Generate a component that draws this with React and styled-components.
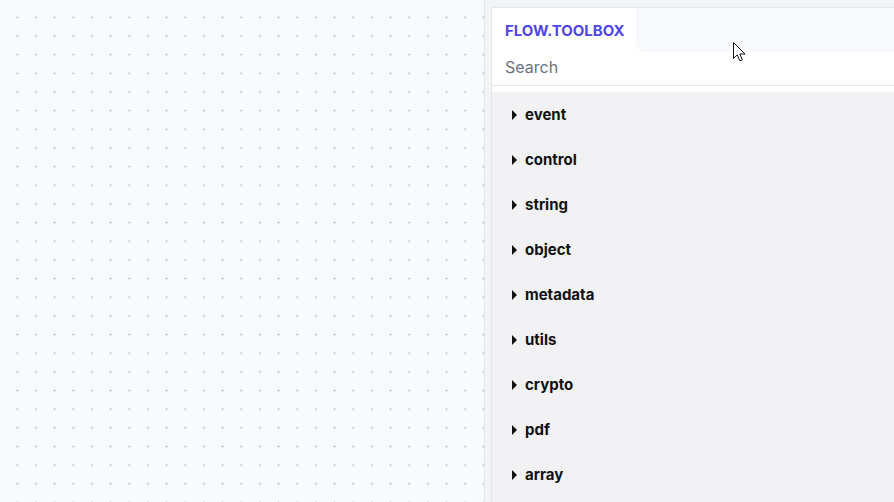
import React from "react";
import styled, { createGlobalStyle } from "styled-components";

const GlobalStyle = createGlobalStyle`
  html, body {
    margin: 0;
    padding: 0;
    height: 100%;
    overflow: hidden;
  }
  body {
    font-family: Inter, "Noto Sans", Arial, sans-serif;
  }
  #root {
    height: 100%;
  }
`;

const Page = styled.div`
  position: relative;
  display: flex;
  width: 894px;
  height: 502px;
  overflow: hidden;
`;

const Canvas = styled.div`
  width: 484px;
  flex-shrink: 0;
  border-right: 1px solid #e4e6ea;
  background-color: #f9fafb;
  background-image: radial-gradient(circle, #c4c6cc 0.9px, transparent 1.2px);
  background-size: 18.67px 18.67px;
  background-position: 8px 8px;
`;

const Sidebar = styled.div`
  flex: 1;
  background: #f3f4f6;
  padding: 7px 0 0 6px;
  display: flex;
`;

const Panel = styled.div`
  flex: 1;
  display: flex;
  flex-direction: column;
  background: #fff;
  border: 1px solid #e5e7eb;
  border-right: none;
  border-bottom: none;
`;

const Header = styled.div`
  display: flex;
  height: 44px;
`;

const Tab = styled.div`
  width: 131px;
  padding-left: 13px;
  display: flex;
  align-items: center;
  font-size: 15px;
  font-weight: 700;
  color: #4f46e5;
`;

const HeaderFill = styled.div`
  flex: 1;
  background: #f7f9fc;
  border-bottom-left-radius: 8px;
`;

const SearchInput = styled.input`
  height: 34px;
  box-sizing: border-box;
  border: none;
  border-bottom: 1px solid #e5e7eb;
  padding: 0 0 3px 13px;
  margin: 0;
  font-family: inherit;
  font-size: 16px;
  color: #111;
  outline: none;
  background: #fff;
  &::placeholder {
    color: #6b7280;
  }
`;

const List = styled.div`
  flex: 1;
  margin-top: 6px;
  background: #f2f2f4;
`;

const Item = styled.div`
  height: 45px;
  display: flex;
  align-items: center;
  padding-left: 20px;
  gap: 8px;
  font-size: 15px;
  font-weight: 700;
  color: #111;
`;

const Caret = styled.span`
  width: 0;
  height: 0;
  border-top: 5px solid transparent;
  border-bottom: 5px solid transparent;
  border-left: 5.5px solid #111;
`;

const Cursor = styled.svg`
  position: absolute;
  left: 733px;
  top: 42px;
`;

const groups = ["event", "control", "string", "object", "metadata", "utils", "crypto", "pdf", "array"];

export default function App() {
  return (
    <>
      <GlobalStyle />
      <Page>
        <Canvas />
        <Sidebar>
          <Panel>
            <Header>
              <Tab>FLOW.TOOLBOX</Tab>
              <HeaderFill />
            </Header>
            <SearchInput placeholder="Search" />
            <List>
              {groups.map((g) => (
                <Item key={g}>
                  <Caret />
                  {g}
                </Item>
              ))}
            </List>
          </Panel>
        </Sidebar>
        <Cursor width="14" height="21" viewBox="0 0 14 21">
          <path
            d="M0.5 0.5 L0.5 16.5 L4.3 12.8 L6.8 18.8 L9.3 17.8 L6.9 12 L12 12 Z"
            fill="#fff"
            stroke="#111"
            strokeWidth="1"
            strokeLinejoin="round"
          />
        </Cursor>
      </Page>
    </>
  );
}
